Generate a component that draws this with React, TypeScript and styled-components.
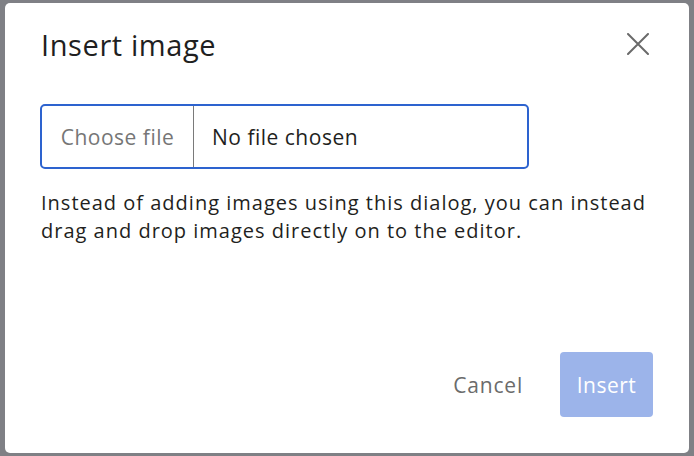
import React from 'react';
import styled, { createGlobalStyle } from 'styled-components';

const GlobalStyle = createGlobalStyle`
    html, body {
        margin: 0;
        padding: 0;
        background: #7f8085;
    }
    body {
        font-family: "Open Sans", Lato, sans-serif;
        color: #1c1c1e;
    }
`;

const Backdrop = styled.div`
    width: 694px;
    height: 456px;
    box-sizing: border-box;
    padding: 3px 5px;
`;

const Dialog = styled.div`
    height: 450px;
    box-sizing: border-box;
    background: #ffffff;
    border-radius: 5px;
    padding: 24px 36px 36px 35px;
    display: flex;
    flex-direction: column;
`;

const Header = styled.div`
    display: flex;
    align-items: center;
    justify-content: space-between;
`;

const Title = styled.h2`
    margin: 0 0 0 1px;
    font-size: 29px;
    line-height: 36px;
    font-weight: 400;
    letter-spacing: 0.6px;
    color: #1f1f21;
`;

const CloseBtn = styled.button`
    border: 0;
    background: none;
    padding: 0;
    margin: 0 3px 2px 0;
    width: 24px;
    height: 24px;
    display: flex;
    align-items: center;
    justify-content: center;
    cursor: pointer;
`;

const FileField = styled.label`
    margin-top: 41px;
    width: 489px;
    height: 65px;
    box-sizing: border-box;
    border: 2px solid #2d63cf;
    border-radius: 5px;
    display: flex;
    align-items: stretch;
    font-size: 21px;
    letter-spacing: 0.5px;
    cursor: pointer;
`;

const Picker = styled.span`
    width: 152px;
    box-sizing: border-box;
    border-right: 1px solid #7a7a7a;
    color: #767676;
    display: flex;
    align-items: center;
    justify-content: center;
`;

const FileName = styled.span`
    padding-left: 18px;
    color: #1f1f21;
    display: flex;
    align-items: center;
`;

const Hint = styled.p`
    margin: 20px 0 0 1px;
    font-size: 20px;
    line-height: 28px;
    letter-spacing: 1px;
    color: #1f1f21;
`;

const Footer = styled.div`
    margin-top: auto;
    display: flex;
    justify-content: flex-end;
    align-items: center;
    gap: 19px;
`;

const TextBtn = styled.button`
    border: 0;
    background: none;
    padding: 0 18px;
    height: 65px;
    font-family: inherit;
    font-size: 21px;
    letter-spacing: 0.8px;
    color: #6b6b6b;
    cursor: pointer;
`;

const PrimaryBtn = styled.button<{ $disabled?: boolean }>`
    border: 0;
    border-radius: 4px;
    width: 93px;
    height: 65px;
    font-family: inherit;
    font-size: 21px;
    letter-spacing: 0.5px;
    color: #ffffff;
    background: ${(p) => (p.$disabled ? '#9cb4ea' : '#2d63cf')};
    cursor: ${(p) => (p.$disabled ? 'default' : 'pointer')};
`;

const CloseIcon = () => (
    <svg width="22" height="22" viewBox="0 0 22 22" fill="none">
        <path d="M1 1L21 21M21 1L1 21" stroke="#6a6a6a" strokeWidth="2" strokeLinecap="round" />
    </svg>
);

export default function App() {
    return (
        <Backdrop>
            <GlobalStyle />
            <Dialog>
                <Header>
                    <Title>Insert image</Title>
                    <CloseBtn aria-label="Close">
                        <CloseIcon />
                    </CloseBtn>
                </Header>
                <FileField>
                    <Picker>Choose file</Picker>
                    <FileName>No file chosen</FileName>
                </FileField>
                <Hint>
                    Instead of adding images using this dialog, you can instead
                    <br />
                    drag and drop images directly on to the editor.
                </Hint>
                <Footer>
                    <TextBtn>Cancel</TextBtn>
                    <PrimaryBtn $disabled>Insert</PrimaryBtn>
                </Footer>
            </Dialog>
        </Backdrop>
    );
}
